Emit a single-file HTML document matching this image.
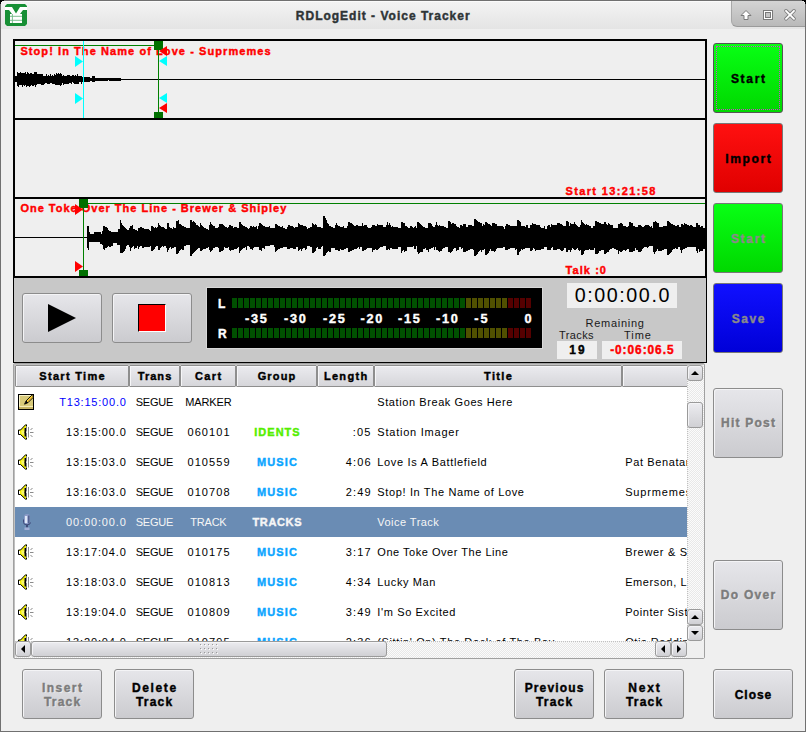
<!DOCTYPE html><html><head><meta charset="utf-8"><style>
html,body{margin:0;padding:0}
body{width:806px;height:732px;position:relative;overflow:hidden;background:#efefef;font-family:'Liberation Sans',sans-serif;color:#000}
.abs{position:absolute}
.t{position:absolute;white-space:nowrap}
.btn{position:absolute;box-sizing:border-box;border:1px solid #8c8c8c;border-radius:3px;background:linear-gradient(#e6e6ea,#cbcbcf);box-shadow:inset 1px 1px 0 #f4f4f6}
</style></head><body>
<div class="abs" style="left:0;top:0;width:806px;height:29px;background:linear-gradient(#f4f4f4,#e4e4e4)"></div>
<div class="abs" style="left:0;top:0;width:804px;height:730px;border:1px solid #707070"></div>
<div class="abs" style="left:3px;top:1px;width:800px;height:1px;background:#fbfbfb"></div>
<div class="t" style="left:295.80px;top:9.74px;font-size:12.0px;line-height:12.0px;letter-spacing:1.000px;color:#2e3436;font-weight:bold;-webkit-text-stroke:0.4px #2e3436;">RDLogEdit - Voice Tracker</div>
<div class="abs" style="left:731px;top:1px;width:73px;height:25px;background:linear-gradient(#d4d4d4,#b9b9b9);border-radius:0 4px 0 6px;border-left:1px solid #a8a8a8;border-bottom:1px solid #9a9a9a"></div>
<svg class="abs" style="left:731px;top:0" width="75" height="28" viewBox="731 0 75 28">
<path d="M746,10.5 L751,15.5 L748,15.5 L748,19.5 L744,19.5 L744,15.5 L741,15.5 Z" fill="#fff" stroke="#7a7a7a" stroke-width="1" stroke-linejoin="round"/>
<rect x="763" y="10" width="10" height="10" fill="#7a7a7a"/>
<rect x="764" y="11" width="8" height="8" fill="#fff"/>
<rect x="765" y="12" width="6" height="6" fill="#7a7a7a"/>
<rect x="766" y="13" width="4" height="4" fill="#c4c4c4"/>
<path d="M786,10.8 L794,18.8 M794,10.8 L786,18.8" stroke="#7a7a7a" stroke-width="3.6" stroke-linecap="round"/>
<path d="M786,10.8 L794,18.8 M794,10.8 L786,18.8" stroke="#fff" stroke-width="1.9" stroke-linecap="round"/>
</svg>
<svg class="abs" style="left:5px;top:4px" width="22" height="22" viewBox="0 0 22 22">
<polygon points="2,0 20,0 22,2 22,20 20,22 2,22 0,20 0,2" fill="#178f35"/>
<polygon points="0,3 7,3 11,9.5 15,3 22,3 22,6 18,6 15,10 7,10 4,6 0,6" fill="#fff"/>
<rect x="5" y="10" width="12" height="9" fill="#fff"/>
<path d="M5,12.3 H17 M5,16.3 H17 M7.4,10 V19" stroke="#6fb884" stroke-width="0.9"/>
</svg>
<svg class="abs" style="left:0;top:0" width="806" height="280" viewBox="0 0 806 280">
<rect x="15" y="41" width="690" height="235" fill="#efefef"/>
<path d="M15,79.5 H705" stroke="#000" stroke-width="1"/>
<path d="M15,237.5 H88" stroke="#000" stroke-width="1"/>
<path d="M15,76 16,76 16,76 17,76 17,72 18,72 18,73 19,73 19,73 20,73 20,72 21,72 21,73 22,73 22,73 23,73 23,73 24,73 24,73 25,73 25,72 26,72 26,74 27,74 27,72 28,72 28,73 29,73 29,74 30,74 30,73 31,73 31,73 32,73 32,74 33,74 33,74 34,74 34,72 35,72 35,72 36,72 36,72 37,72 37,74 38,74 38,74 39,74 39,74 40,74 40,74 41,74 41,74 42,74 42,74 43,74 43,76 44,76 44,76 45,76 45,76 46,76 46,74 47,74 47,76 48,76 48,75 49,75 49,76 50,76 50,74 51,74 51,76 52,76 52,75 53,75 53,76 54,76 54,74 55,74 55,75 56,75 56,73 57,73 57,74 58,74 58,73 59,73 59,74 60,74 60,73 61,73 61,74 62,74 62,76 63,76 63,75 64,75 64,76 65,76 65,76 66,76 66,76 67,76 67,75 68,75 68,75 69,75 69,75 70,75 70,76 71,76 71,76 72,76 72,75 73,75 73,75 74,75 74,76 75,76 75,75 76,75 76,76 77,76 77,74 78,74 78,76 79,76 79,76 80,76 80,76 81,76 81,76 82,76 82,77 83,77 83,77 84,77 84,77 85,77 85,77 86,77 86,77 87,77 87,77 88,77 88,77 89,77 89,77 90,77 90,78 91,78 91,78 92,78 92,76 93,76 93,76 94,76 94,76 95,76 95,78 96,78 96,78 97,78 97,78 98,78 98,78 99,78 99,78 100,78 100,78 101,78 101,78 102,78 102,78 103,78 103,78 104,78 104,78 105,78 105,78 106,78 106,78 107,78 107,78 108,78 108,78 109,78 109,78 110,78 110,78 111,78 111,78 112,78 112,78 113,78 113,78 114,78 114,78 115,78 115,78 116,78 116,78 117,78 117,78 118,78 118,78 119,78 119,78 120,78 120,78 121,78 121,81 120,81 120,81 119,81 119,81 118,81 118,81 117,81 117,81 116,81 116,81 115,81 115,81 114,81 114,81 113,81 113,81 112,81 112,81 111,81 111,81 110,81 110,81 109,81 109,80 108,80 108,81 107,81 107,81 106,81 106,81 105,81 105,81 104,81 104,81 103,81 103,81 102,81 102,81 101,81 101,81 100,81 100,81 99,81 99,81 98,81 98,81 97,81 97,81 96,81 96,81 95,81 95,82 94,82 94,82 93,82 93,82 92,82 92,81 91,81 91,81 90,81 90,82 89,82 89,82 88,82 88,82 87,82 87,82 86,82 86,82 85,82 85,82 84,82 84,82 83,82 83,82 82,82 82,84 81,84 81,82 80,82 80,82 79,82 79,84 78,84 78,84 77,84 77,84 76,84 76,84 75,84 75,84 74,84 74,83 73,83 73,82 72,82 72,84 71,84 71,83 70,83 70,83 69,83 69,84 68,84 68,84 67,84 67,84 66,84 66,84 65,84 65,84 64,84 64,85 63,85 63,83 62,83 62,85 61,85 61,86 60,86 60,85 59,85 59,85 58,85 58,85 57,85 57,85 56,85 56,85 55,85 55,84 54,84 54,84 53,84 53,84 52,84 52,83 51,83 51,83 50,83 50,84 49,84 49,84 48,84 48,84 47,84 47,83 46,83 46,83 45,83 45,84 44,84 44,85 43,85 43,85 42,85 42,85 41,85 41,84 40,84 40,84 39,84 39,84 38,84 38,84 37,84 37,85 36,85 36,87 35,87 35,85 34,85 34,86 33,86 33,86 32,86 32,85 31,85 31,86 30,86 30,87 29,87 29,86 28,86 28,86 27,86 27,87 26,87 26,85 25,85 25,86 24,86 24,85 23,85 23,87 22,87 22,85 21,85 21,85 20,85 20,85 19,85 19,87 18,87 18,86 17,86 17,82 16,82 16,82 15,82Z" fill="#000"/>
<path d="M87,226 88,226 88,226 89,226 89,232 90,232 90,234 91,234 91,234 92,234 92,234 93,234 93,234 94,234 94,232 95,232 95,232 96,232 96,232 97,232 97,232 98,232 98,232 99,232 99,232 100,232 100,232 101,232 101,234 102,234 102,231 103,231 103,226 104,226 104,226 105,226 105,227 106,227 106,227 107,227 107,228 108,228 108,230 109,230 109,231 110,231 110,231 111,231 111,232 112,232 112,232 113,232 113,232 114,232 114,232 115,232 115,232 116,232 116,232 117,232 117,232 118,232 118,229 119,229 119,229 120,229 120,220 121,220 121,223 122,223 122,225 123,225 123,226 124,226 124,227 125,227 125,228 126,228 126,229 127,229 127,230 128,230 128,230 129,230 129,228 130,228 130,226 131,226 131,226 132,226 132,225 133,225 133,229 134,229 134,229 135,229 135,230 136,230 136,230 137,230 137,231 138,231 138,228 139,228 139,228 140,228 140,227 141,227 141,227 142,227 142,228 143,228 143,228 144,228 144,229 145,229 145,229 146,229 146,229 147,229 147,229 148,229 148,229 149,229 149,230 150,230 150,231 151,231 151,226 152,226 152,226 153,226 153,227 154,227 154,228 155,228 155,227 156,227 156,228 157,228 157,227 158,227 158,223 159,223 159,225 160,225 160,226 161,226 161,227 162,227 162,227 163,227 163,227 164,227 164,228 165,228 165,229 166,229 166,229 167,229 167,223 168,223 168,223 169,223 169,227 170,227 170,228 171,228 171,228 172,228 172,229 173,229 173,227 174,227 174,228 175,228 175,228 176,228 176,221 177,221 177,221 178,221 178,220 179,220 179,224 180,224 180,224 181,224 181,225 182,225 182,226 183,226 183,226 184,226 184,227 185,227 185,227 186,227 186,228 187,228 187,228 188,228 188,228 189,228 189,228 190,228 190,220 191,220 191,220 192,220 192,222 193,222 193,221 194,221 194,222 195,222 195,223 196,223 196,225 197,225 197,225 198,225 198,226 199,226 199,227 200,227 200,223 201,223 201,225 202,225 202,226 203,226 203,227 204,227 204,228 205,228 205,228 206,228 206,229 207,229 207,229 208,229 208,230 209,230 209,225 210,225 210,222 211,222 211,224 212,224 212,225 213,225 213,226 214,226 214,226 215,226 215,228 216,228 216,228 217,228 217,228 218,228 218,227 219,227 219,224 220,224 220,224 221,224 221,224 222,224 222,224 223,224 223,225 224,225 224,226 225,226 225,227 226,227 226,227 227,227 227,228 228,228 228,227 229,227 229,225 230,225 230,225 231,225 231,226 232,226 232,226 233,226 233,228 234,228 234,227 235,227 235,227 236,227 236,227 237,227 237,228 238,228 238,228 239,228 239,222 240,222 240,222 241,222 241,224 242,224 242,225 243,225 243,226 244,226 244,226 245,226 245,227 246,227 246,227 247,227 247,228 248,228 248,229 249,229 249,228 250,228 250,226 251,226 251,226 252,226 252,227 253,227 253,226 254,226 254,227 255,227 255,227 256,227 256,226 257,226 257,229 258,229 258,226 259,226 259,223 260,223 260,223 261,223 261,224 262,224 262,225 263,225 263,226 264,226 264,226 265,226 265,227 266,227 266,227 267,227 267,227 268,227 268,227 269,227 269,226 270,226 270,228 271,228 271,228 272,228 272,228 273,228 273,228 274,228 274,228 275,228 275,224 276,224 276,224 277,224 277,225 278,225 278,226 279,226 279,226 280,226 280,227 281,227 281,227 282,227 282,226 283,226 283,228 284,228 284,228 285,228 285,229 286,229 286,229 287,229 287,227 288,227 288,225 289,225 289,225 290,225 290,226 291,226 291,226 292,226 292,226 293,226 293,227 294,227 294,228 295,228 295,227 296,227 296,227 297,227 297,227 298,227 298,223 299,223 299,224 300,224 300,225 301,225 301,225 302,225 302,225 303,225 303,226 304,226 304,226 305,226 305,226 306,226 306,227 307,227 307,229 308,229 308,228 309,228 309,228 310,228 310,227 311,227 311,227 312,227 312,223 313,223 313,224 314,224 314,225 315,225 315,224 316,224 316,225 317,225 317,227 318,227 318,227 319,227 319,227 320,227 320,227 321,227 321,228 322,228 322,228 323,228 323,216 324,216 324,216 325,216 325,218 326,218 326,220 327,220 327,223 328,223 328,224 329,224 329,226 330,226 330,226 331,226 331,227 332,227 332,227 333,227 333,228 334,228 334,228 335,228 335,225 336,225 336,223 337,223 337,225 338,225 338,226 339,226 339,226 340,226 340,227 341,227 341,227 342,227 342,227 343,227 343,226 344,226 344,228 345,228 345,228 346,228 346,228 347,228 347,226 348,226 348,222 349,222 349,222 350,222 350,223 351,223 351,223 352,223 352,224 353,224 353,225 354,225 354,226 355,226 355,226 356,226 356,225 357,225 357,225 358,225 358,226 359,226 359,226 360,226 360,226 361,226 361,226 362,226 362,223 363,223 363,226 364,226 364,225 365,225 365,225 366,225 366,225 367,225 367,227 368,227 368,228 369,228 369,228 370,228 370,228 371,228 371,227 372,227 372,225 373,225 373,225 374,225 374,225 375,225 375,226 376,226 376,226 377,226 377,224 378,224 378,225 379,225 379,225 380,225 380,225 381,225 381,225 382,225 382,225 383,225 383,227 384,227 384,227 385,227 385,227 386,227 386,225 387,225 387,222 388,222 388,225 389,225 389,223 390,223 390,225 391,225 391,227 392,227 392,226 393,226 393,227 394,227 394,227 395,227 395,227 396,227 396,227 397,227 397,227 398,227 398,228 399,228 399,228 400,228 400,228 401,228 401,222 402,222 402,222 403,222 403,223 404,223 404,223 405,223 405,226 406,226 406,226 407,226 407,227 408,227 408,228 409,228 409,228 410,228 410,226 411,226 411,226 412,226 412,227 413,227 413,228 414,228 414,227 415,227 415,226 416,226 416,228 417,228 417,222 418,222 418,222 419,222 419,223 420,223 420,224 421,224 421,225 422,225 422,226 423,226 423,227 424,227 424,227 425,227 425,228 426,228 426,228 427,228 427,228 428,228 428,223 429,223 429,223 430,223 430,223 431,223 431,224 432,224 432,226 433,226 433,227 434,227 434,227 435,227 435,225 436,225 436,222 437,222 437,225 438,225 438,226 439,226 439,225 440,225 440,226 441,226 441,226 442,226 442,226 443,226 443,226 444,226 444,227 445,227 445,227 446,227 446,228 447,228 447,228 448,228 448,221 449,221 449,221 450,221 450,222 451,222 451,224 452,224 452,223 453,223 453,223 454,223 454,224 455,224 455,224 456,224 456,226 457,226 457,227 458,227 458,227 459,227 459,228 460,228 460,225 461,225 461,225 462,225 462,226 463,226 463,224 464,224 464,224 465,224 465,224 466,224 466,227 467,227 467,227 468,227 468,225 469,225 469,225 470,225 470,225 471,225 471,225 472,225 472,226 473,226 473,226 474,226 474,219 475,219 475,219 476,219 476,220 477,220 477,221 478,221 478,222 479,222 479,222 480,222 480,223 481,223 481,223 482,223 482,226 483,226 483,224 484,224 484,225 485,225 485,222 486,222 486,222 487,222 487,223 488,223 488,224 489,224 489,224 490,224 490,225 491,225 491,226 492,226 492,223 493,223 493,223 494,223 494,223 495,223 495,224 496,224 496,224 497,224 497,226 498,226 498,226 499,226 499,226 500,226 500,226 501,226 501,226 502,226 502,226 503,226 503,227 504,227 504,229 505,229 505,226 506,226 506,224 507,224 507,224 508,224 508,225 509,225 509,225 510,225 510,226 511,226 511,226 512,226 512,226 513,226 513,226 514,226 514,226 515,226 515,226 516,226 516,226 517,226 517,220 518,220 518,220 519,220 519,221 520,221 520,222 521,222 521,226 522,226 522,226 523,226 523,226 524,226 524,226 525,226 525,227 526,227 526,225 527,225 527,225 528,225 528,228 529,228 529,228 530,228 530,225 531,225 531,225 532,225 532,223 533,223 533,224 534,224 534,224 535,224 535,224 536,224 536,225 537,225 537,225 538,225 538,225 539,225 539,225 540,225 540,227 541,227 541,228 542,228 542,228 543,228 543,228 544,228 544,226 545,226 545,229 546,229 546,229 547,229 547,226 548,226 548,225 549,225 549,225 550,225 550,227 551,227 551,224 552,224 552,225 553,225 553,225 554,225 554,225 555,225 555,225 556,225 556,225 557,225 557,223 558,223 558,223 559,223 559,223 560,223 560,224 561,224 561,224 562,224 562,225 563,225 563,226 564,226 564,226 565,226 565,226 566,226 566,221 567,221 567,221 568,221 568,222 569,222 569,226 570,226 570,223 571,223 571,224 572,224 572,224 573,224 573,224 574,224 574,222 575,222 575,224 576,224 576,225 577,225 577,226 578,226 578,227 579,227 579,227 580,227 580,225 581,225 581,220 582,220 582,222 583,222 583,223 584,223 584,224 585,224 585,225 586,225 586,224 587,224 587,225 588,225 588,225 589,225 589,226 590,226 590,226 591,226 591,228 592,228 592,228 593,228 593,226 594,226 594,226 595,226 595,221 596,221 596,221 597,221 597,222 598,222 598,222 599,222 599,223 600,223 600,223 601,223 601,224 602,224 602,224 603,224 603,224 604,224 604,222 605,222 605,222 606,222 606,224 607,224 607,225 608,225 608,223 609,223 609,224 610,224 610,225 611,225 611,225 612,225 612,225 613,225 613,228 614,228 614,228 615,228 615,228 616,228 616,228 617,228 617,228 618,228 618,224 619,224 619,224 620,224 620,223 621,223 621,223 622,223 622,224 623,224 623,226 624,226 624,226 625,226 625,226 626,226 626,227 627,227 627,227 628,227 628,226 629,226 629,222 630,222 630,222 631,222 631,223 632,223 632,223 633,223 633,226 634,226 634,226 635,226 635,227 636,227 636,227 637,227 637,227 638,227 638,225 639,225 639,225 640,225 640,225 641,225 641,226 642,226 642,227 643,227 643,227 644,227 644,226 645,226 645,225 646,225 646,225 647,225 647,225 648,225 648,225 649,225 649,226 650,226 650,227 651,227 651,226 652,226 652,228 653,228 653,222 654,222 654,222 655,222 655,221 656,221 656,222 657,222 657,223 658,223 658,223 659,223 659,227 660,227 660,227 661,227 661,227 662,227 662,227 663,227 663,226 664,226 664,226 665,226 665,226 666,226 666,226 667,226 667,221 668,221 668,221 669,221 669,222 670,222 670,223 671,223 671,224 672,224 672,224 673,224 673,225 674,225 674,225 675,225 675,226 676,226 676,226 677,226 677,225 678,225 678,225 679,225 679,227 680,227 680,227 681,227 681,224 682,224 682,224 683,224 683,225 684,225 684,223 685,223 685,224 686,224 686,224 687,224 687,225 688,225 688,225 689,225 689,226 690,226 690,225 691,225 691,225 692,225 692,226 693,226 693,227 694,227 694,227 695,227 695,227 696,227 696,223 697,223 697,223 698,223 698,225 699,225 699,225 700,225 700,227 701,227 701,226 702,226 702,226 703,226 703,228 704,228 704,228 705,228 705,228 706,228 706,249 705,249 705,249 704,249 704,249 703,249 703,251 702,251 702,251 701,251 701,251 700,251 700,252 699,252 699,249 698,249 698,253 697,253 697,251 696,251 696,247 695,247 695,247 694,247 694,247 693,247 693,247 692,247 692,247 691,247 691,247 690,247 690,247 689,247 689,247 688,247 688,247 687,247 687,248 686,248 686,248 685,248 685,249 684,249 684,249 683,249 683,250 682,250 682,253 681,253 681,250 680,250 680,247 679,247 679,247 678,247 678,249 677,249 677,249 676,249 676,248 675,248 675,249 674,249 674,249 673,249 673,250 672,250 672,252 671,252 671,253 670,253 670,254 669,254 669,255 668,255 668,255 667,255 667,249 666,249 666,249 665,249 665,249 664,249 664,250 663,250 663,250 662,250 662,251 661,251 661,251 660,251 660,251 659,251 659,251 658,251 658,249 657,249 657,251 656,251 656,252 655,252 655,254 654,254 654,252 653,252 653,246 652,246 652,246 651,246 651,246 650,246 650,246 649,246 649,247 648,247 648,248 647,248 647,247 646,247 646,247 645,247 645,247 644,247 644,248 643,248 643,249 642,249 642,251 641,251 641,252 640,252 640,252 639,252 639,252 638,252 638,250 637,250 637,250 636,250 636,248 635,248 635,251 634,251 634,251 633,251 633,252 632,252 632,252 631,252 631,252 630,252 630,252 629,252 629,249 628,249 628,249 627,249 627,250 626,250 626,251 625,251 625,250 624,250 624,250 623,250 623,251 622,251 622,252 621,252 621,252 620,252 620,251 619,251 619,254 618,254 618,250 617,250 617,250 616,250 616,249 615,249 615,249 614,249 614,248 613,248 613,248 612,248 612,249 611,249 611,249 610,249 610,250 609,250 609,252 608,252 608,252 607,252 607,253 606,253 606,254 605,254 605,254 604,254 604,250 603,250 603,250 602,250 602,250 601,250 601,251 600,251 600,251 599,251 599,253 598,253 598,254 597,254 597,254 596,254 596,254 595,254 595,248 594,248 594,250 593,250 593,250 592,250 592,250 591,250 591,250 590,250 590,249 589,249 589,250 588,250 588,250 587,250 587,250 586,250 586,250 585,250 585,251 584,251 584,254 583,254 583,255 582,255 582,255 581,255 581,250 580,250 580,251 579,251 579,250 578,250 578,248 577,248 577,249 576,249 576,250 575,250 575,250 574,250 574,249 573,249 573,248 572,248 572,250 571,250 571,252 570,252 570,250 569,250 569,250 568,250 568,252 567,252 567,252 566,252 566,248 565,248 565,248 564,248 564,250 563,250 563,251 562,251 562,251 561,251 561,250 560,250 560,249 559,249 559,249 558,249 558,249 557,249 557,250 556,250 556,250 555,250 555,250 554,250 554,250 553,250 553,247 552,247 552,248 551,248 551,250 550,250 550,250 549,250 549,250 548,250 548,250 547,250 547,247 546,247 546,247 545,247 545,247 544,247 544,249 543,249 543,249 542,249 542,249 541,249 541,250 540,250 540,250 539,250 539,250 538,250 538,250 537,250 537,250 536,250 536,251 535,251 535,249 534,249 534,248 533,248 533,250 532,250 532,251 531,251 531,251 530,251 530,248 529,248 529,248 528,248 528,248 527,248 527,248 526,248 526,248 525,248 525,249 524,249 524,249 523,249 523,250 522,250 522,249 521,249 521,251 520,251 520,252 519,252 519,255 518,255 518,255 517,255 517,249 516,249 516,250 515,250 515,248 514,248 514,248 513,248 513,248 512,248 512,248 511,248 511,248 510,248 510,249 509,249 509,249 508,249 508,250 507,250 507,250 506,250 506,250 505,250 505,247 504,247 504,247 503,247 503,248 502,248 502,248 501,248 501,248 500,248 500,248 499,248 499,248 498,248 498,248 497,248 497,249 496,249 496,251 495,251 495,252 494,252 494,251 493,251 493,251 492,251 492,251 491,251 491,249 490,249 490,251 489,251 489,253 488,253 488,254 487,254 487,255 486,255 486,255 485,255 485,249 484,249 484,250 483,250 483,250 482,250 482,252 481,252 481,250 480,250 480,251 479,251 479,252 478,252 478,254 477,254 477,255 476,255 476,256 475,256 475,256 474,256 474,250 473,250 473,249 472,249 472,249 471,249 471,249 470,249 470,250 469,250 469,250 468,250 468,251 467,251 467,251 466,251 466,252 465,252 465,252 464,252 464,252 463,252 463,248 462,248 462,249 461,249 461,247 460,247 460,247 459,247 459,250 458,250 458,250 457,250 457,251 456,251 456,248 455,248 455,248 454,248 454,249 453,249 453,251 452,251 452,252 451,252 451,253 450,253 450,252 449,252 449,252 448,252 448,247 447,247 447,247 446,247 446,247 445,247 445,248 444,248 444,248 443,248 443,249 442,249 442,251 441,251 441,251 440,251 440,252 439,252 439,251 438,251 438,250 437,250 437,250 436,250 436,247 435,247 435,250 434,250 434,247 433,247 433,248 432,248 432,248 431,248 431,249 430,249 430,249 429,249 429,252 428,252 428,250 427,250 427,250 426,250 426,248 425,248 425,249 424,249 424,249 423,249 423,252 422,252 422,252 421,252 421,252 420,252 420,253 419,253 419,254 418,254 418,252 417,252 417,246 416,246 416,249 415,249 415,249 414,249 414,246 413,246 413,247 412,247 412,247 411,247 411,247 410,247 410,247 409,247 409,247 408,247 408,247 407,247 407,251 406,251 406,251 405,251 405,252 404,252 404,250 403,250 403,251 402,251 402,253 401,253 401,247 400,247 400,247 399,247 399,247 398,247 398,249 397,249 397,249 396,249 396,249 395,249 395,249 394,249 394,249 393,249 393,249 392,249 392,248 391,248 391,248 390,248 390,250 389,250 389,249 388,249 388,250 387,250 387,250 386,250 386,246 385,246 385,246 384,246 384,246 383,246 383,247 382,247 382,247 381,247 381,247 380,247 380,248 379,248 379,249 378,249 378,250 377,250 377,250 376,250 376,249 375,249 375,250 374,250 374,250 373,250 373,252 372,252 372,248 371,248 371,248 370,248 370,248 369,248 369,248 368,248 368,248 367,248 367,249 366,249 366,250 365,250 365,250 364,250 364,251 363,251 363,251 362,251 362,247 361,247 361,247 360,247 360,249 359,249 359,247 358,247 358,248 357,248 357,249 356,249 356,249 355,249 355,249 354,249 354,250 353,250 353,250 352,250 352,251 351,251 351,251 350,251 350,252 349,252 349,252 348,252 348,248 347,248 347,248 346,248 346,249 345,249 345,249 344,249 344,250 343,250 343,250 342,250 342,250 341,250 341,249 340,249 340,251 339,251 339,251 338,251 338,250 337,250 337,250 336,250 336,250 335,250 335,248 334,248 334,248 333,248 333,248 332,248 332,248 331,248 331,252 330,252 330,252 329,252 329,251 328,251 328,252 327,252 327,253 326,253 326,255 325,255 325,256 324,256 324,256 323,256 323,246 322,246 322,247 321,247 321,249 320,249 320,249 319,249 319,249 318,249 318,247 317,247 317,248 316,248 316,251 315,251 315,252 314,252 314,253 313,253 313,253 312,253 312,247 311,247 311,247 310,247 310,246 309,246 309,246 308,246 308,246 307,246 307,249 306,249 306,250 305,250 305,248 304,248 304,248 303,248 303,249 302,249 302,251 301,251 301,249 300,249 300,250 299,250 299,251 298,251 298,247 297,247 297,247 296,247 296,249 295,249 295,249 294,249 294,249 293,249 293,248 292,248 292,248 291,248 291,248 290,248 290,249 289,249 289,249 288,249 288,249 287,249 287,247 286,247 286,247 285,247 285,247 284,247 284,247 283,247 283,248 282,248 282,248 281,248 281,248 280,248 280,249 279,249 279,249 278,249 278,250 277,250 277,251 276,251 276,252 275,252 275,247 274,247 274,245 273,245 273,245 272,245 272,245 271,245 271,245 270,245 270,246 269,246 269,246 268,246 268,246 267,246 267,246 266,246 266,246 265,246 265,249 264,249 264,248 263,248 263,248 262,248 262,251 261,251 261,250 260,250 260,250 259,250 259,247 258,247 258,247 257,247 257,247 256,247 256,247 255,247 255,247 254,247 254,248 253,248 253,250 252,250 252,249 251,249 251,249 250,249 250,247 249,247 249,246 248,246 248,246 247,246 247,250 246,250 246,247 245,247 245,248 244,248 244,248 243,248 243,249 242,249 242,250 241,250 241,251 240,251 240,253 239,253 239,247 238,247 238,248 237,248 237,249 236,249 236,249 235,249 235,249 234,249 234,250 233,250 233,250 232,250 232,250 231,250 231,251 230,251 230,250 229,250 229,247 228,247 228,248 227,248 227,248 226,248 226,248 225,248 225,247 224,247 224,250 223,250 223,251 222,251 222,251 221,251 221,252 220,252 220,252 219,252 219,248 218,248 218,247 217,247 217,247 216,247 216,247 215,247 215,248 214,248 214,248 213,248 213,250 212,250 212,251 211,251 211,252 210,252 210,250 209,250 209,247 208,247 208,248 207,248 207,248 206,248 206,249 205,249 205,249 204,249 204,249 203,249 203,250 202,250 202,251 201,251 201,251 200,251 200,248 199,248 199,248 198,248 198,249 197,249 197,250 196,250 196,251 195,251 195,252 194,252 194,253 193,253 193,254 192,254 192,256 191,256 191,256 190,256 190,245 189,245 189,245 188,245 188,245 187,245 187,245 186,245 186,246 185,246 185,246 184,246 184,250 183,250 183,250 182,250 182,249 181,249 181,250 180,250 180,251 179,251 179,253 178,253 178,254 177,254 177,254 176,254 176,247 175,247 175,247 174,247 174,248 173,248 173,248 172,248 172,249 171,249 171,247 170,247 170,248 169,248 169,250 168,250 168,252 167,252 167,248 166,248 166,246 165,246 165,246 164,246 164,247 163,247 163,246 162,246 162,247 161,247 161,248 160,248 160,250 159,250 159,250 158,250 158,246 157,246 157,246 156,246 156,247 155,247 155,249 154,249 154,250 153,250 153,251 152,251 152,251 151,251 151,246 150,246 150,247 149,247 149,247 148,247 148,247 147,247 147,247 146,247 146,247 145,247 145,247 144,247 144,248 143,248 143,248 142,248 142,246 141,246 141,246 140,246 140,247 139,247 139,249 138,249 138,246 137,246 137,248 136,248 136,248 135,248 135,249 134,249 134,246 133,246 133,247 132,247 132,248 131,248 131,251 130,251 130,247 129,247 129,245 128,245 128,245 127,245 127,246 126,246 126,249 125,249 125,251 124,251 124,252 123,252 123,253 122,253 122,253 121,253 121,253 120,253 120,245 119,245 119,245 118,245 118,245 117,245 117,243 116,243 116,243 115,243 115,243 114,243 114,243 113,243 113,246 112,246 112,246 111,246 111,247 110,247 110,247 109,247 109,246 108,246 108,247 107,247 107,248 106,248 106,248 105,248 105,250 104,250 104,249 103,249 103,245 102,245 102,244 101,244 101,244 100,244 100,242 99,242 99,242 98,242 98,242 97,242 97,242 96,242 96,242 95,242 95,242 94,242 94,242 93,242 93,242 92,242 92,242 91,242 91,242 90,242 90,242 89,242 89,250 88,250 88,248 87,248Z" fill="#000"/>
<g fill="#000">
<rect x="13" y="39" width="694" height="2"/>
<rect x="13" y="118" width="694" height="2"/>
<rect x="13" y="197" width="694" height="2"/>
<rect x="13" y="276" width="694" height="2"/>
<rect x="13" y="39" width="2" height="239"/>
<rect x="705" y="39" width="2" height="239"/>
</g></svg>
<div class="t" style="left:20.40px;top:45.69px;font-size:11.0px;line-height:11.0px;letter-spacing:1.076px;color:#ff0000;font-weight:bold;-webkit-text-stroke:0.4px #ff0000;">Stop! In The Name of Love - Suprmemes</div>
<div class="t" style="left:20.40px;top:203.49px;font-size:11.0px;line-height:11.0px;letter-spacing:0.999px;color:#ff0000;font-weight:bold;-webkit-text-stroke:0.4px #ff0000;">One Toke Over The Line - Brewer &amp; Shipley</div>
<div class="t" style="left:565.50px;top:185.69px;font-size:11.0px;line-height:11.0px;letter-spacing:1.362px;color:#ff0000;font-weight:bold;-webkit-text-stroke:0.4px #ff0000;">Start 13:21:58</div>
<div class="t" style="left:565.50px;top:264.69px;font-size:11.0px;line-height:11.0px;letter-spacing:1.075px;color:#ff0000;font-weight:bold;-webkit-text-stroke:0.4px #ff0000;">Talk :0</div>
<svg class="abs" style="left:0;top:0" width="806" height="280" viewBox="0 0 806 280">
<rect x="15" y="45" width="140" height="1" fill="#008000"/>
<rect x="158" y="41" width="1" height="77" fill="#008000"/>
<rect x="154" y="41" width="9" height="9" fill="#007000"/>
<rect x="154" y="112" width="9" height="6" fill="#007000"/>
<rect x="83" y="41" width="1" height="77" fill="#00ffff"/>
<path d="M75,56 L83,61.5 L75,67Z M75,93 L83,98.5 L75,104Z" fill="#00ffff"/>
<path d="M159,51 L167,46 L167,56Z M159,108 L167,103 L167,113Z" fill="#ff0000"/>
<path d="M159,61 L167,56 L167,66Z M159,98 L167,93 L167,103Z" fill="#00ffff"/>
<rect x="88" y="203" width="617" height="1" fill="#008000"/>
<rect x="83" y="199" width="1" height="77" fill="#008000"/>
<rect x="79" y="199" width="9" height="9" fill="#007000"/>
<rect x="79" y="270" width="9" height="6" fill="#007000"/>
<path d="M75,204 L83,209.5 L75,215Z M75,261 L83,266.5 L75,272Z" fill="#ff0000"/>
</svg>
<div class="abs" style="left:13px;top:278px;width:692px;height:84px;background:#c8c8c8;border:1px solid #000;border-top:0"></div>
<div class="btn" style="left:22px;top:293px;width:80px;height:50px"></div>
<svg class="abs" style="left:48px;top:304px" width="29" height="29"><path d="M0,0 L28,14 L0,28Z" fill="#000"/></svg>
<div class="btn" style="left:112px;top:293px;width:80px;height:50px"></div>
<div class="abs" style="left:138px;top:304px;width:28px;height:28px;background:#ff0000;box-sizing:border-box;border-top:1px solid #000;border-left:1px solid #000;border-right:1px solid #fff;border-bottom:1px solid #fff"></div>
<div class="abs" style="left:206px;top:287px;width:335px;height:60px;background:#000;border:1px solid #d8d8d8"></div>
<svg class="abs" style="left:0;top:0" width="806" height="360" viewBox="0 0 806 360"><rect x="232" y="298" width="5" height="10" fill="#005000"/><rect x="232" y="328" width="5" height="10" fill="#005000"/><rect x="238" y="298" width="5" height="10" fill="#005000"/><rect x="238" y="328" width="5" height="10" fill="#005000"/><rect x="244" y="298" width="5" height="10" fill="#005000"/><rect x="244" y="328" width="5" height="10" fill="#005000"/><rect x="250" y="298" width="5" height="10" fill="#005000"/><rect x="250" y="328" width="5" height="10" fill="#005000"/><rect x="256" y="298" width="5" height="10" fill="#005000"/><rect x="256" y="328" width="5" height="10" fill="#005000"/><rect x="262" y="298" width="5" height="10" fill="#005000"/><rect x="262" y="328" width="5" height="10" fill="#005000"/><rect x="268" y="298" width="5" height="10" fill="#005000"/><rect x="268" y="328" width="5" height="10" fill="#005000"/><rect x="274" y="298" width="5" height="10" fill="#005000"/><rect x="274" y="328" width="5" height="10" fill="#005000"/><rect x="280" y="298" width="5" height="10" fill="#005000"/><rect x="280" y="328" width="5" height="10" fill="#005000"/><rect x="286" y="298" width="5" height="10" fill="#005000"/><rect x="286" y="328" width="5" height="10" fill="#005000"/><rect x="292" y="298" width="5" height="10" fill="#005000"/><rect x="292" y="328" width="5" height="10" fill="#005000"/><rect x="298" y="298" width="5" height="10" fill="#005000"/><rect x="298" y="328" width="5" height="10" fill="#005000"/><rect x="304" y="298" width="5" height="10" fill="#005000"/><rect x="304" y="328" width="5" height="10" fill="#005000"/><rect x="310" y="298" width="5" height="10" fill="#005000"/><rect x="310" y="328" width="5" height="10" fill="#005000"/><rect x="316" y="298" width="5" height="10" fill="#005000"/><rect x="316" y="328" width="5" height="10" fill="#005000"/><rect x="322" y="298" width="5" height="10" fill="#005000"/><rect x="322" y="328" width="5" height="10" fill="#005000"/><rect x="328" y="298" width="5" height="10" fill="#005000"/><rect x="328" y="328" width="5" height="10" fill="#005000"/><rect x="334" y="298" width="5" height="10" fill="#005000"/><rect x="334" y="328" width="5" height="10" fill="#005000"/><rect x="340" y="298" width="5" height="10" fill="#005000"/><rect x="340" y="328" width="5" height="10" fill="#005000"/><rect x="346" y="298" width="5" height="10" fill="#005000"/><rect x="346" y="328" width="5" height="10" fill="#005000"/><rect x="352" y="298" width="5" height="10" fill="#005000"/><rect x="352" y="328" width="5" height="10" fill="#005000"/><rect x="358" y="298" width="5" height="10" fill="#005000"/><rect x="358" y="328" width="5" height="10" fill="#005000"/><rect x="364" y="298" width="5" height="10" fill="#005000"/><rect x="364" y="328" width="5" height="10" fill="#005000"/><rect x="370" y="298" width="5" height="10" fill="#005000"/><rect x="370" y="328" width="5" height="10" fill="#005000"/><rect x="376" y="298" width="5" height="10" fill="#005000"/><rect x="376" y="328" width="5" height="10" fill="#005000"/><rect x="382" y="298" width="5" height="10" fill="#005000"/><rect x="382" y="328" width="5" height="10" fill="#005000"/><rect x="388" y="298" width="5" height="10" fill="#005000"/><rect x="388" y="328" width="5" height="10" fill="#005000"/><rect x="394" y="298" width="5" height="10" fill="#005000"/><rect x="394" y="328" width="5" height="10" fill="#005000"/><rect x="400" y="298" width="5" height="10" fill="#005000"/><rect x="400" y="328" width="5" height="10" fill="#005000"/><rect x="406" y="298" width="5" height="10" fill="#005000"/><rect x="406" y="328" width="5" height="10" fill="#005000"/><rect x="412" y="298" width="5" height="10" fill="#005000"/><rect x="412" y="328" width="5" height="10" fill="#005000"/><rect x="418" y="298" width="5" height="10" fill="#005000"/><rect x="418" y="328" width="5" height="10" fill="#005000"/><rect x="424" y="298" width="5" height="10" fill="#005000"/><rect x="424" y="328" width="5" height="10" fill="#005000"/><rect x="430" y="298" width="5" height="10" fill="#005000"/><rect x="430" y="328" width="5" height="10" fill="#005000"/><rect x="436" y="298" width="5" height="10" fill="#005000"/><rect x="436" y="328" width="5" height="10" fill="#005000"/><rect x="442" y="298" width="5" height="10" fill="#005000"/><rect x="442" y="328" width="5" height="10" fill="#005000"/><rect x="448" y="298" width="5" height="10" fill="#005000"/><rect x="448" y="328" width="5" height="10" fill="#005000"/><rect x="454" y="298" width="5" height="10" fill="#005000"/><rect x="454" y="328" width="5" height="10" fill="#005000"/><rect x="460" y="298" width="5" height="10" fill="#005000"/><rect x="460" y="328" width="5" height="10" fill="#005000"/><rect x="466" y="298" width="5" height="10" fill="#505000"/><rect x="466" y="328" width="5" height="10" fill="#505000"/><rect x="472" y="298" width="5" height="10" fill="#505000"/><rect x="472" y="328" width="5" height="10" fill="#505000"/><rect x="478" y="298" width="5" height="10" fill="#505000"/><rect x="478" y="328" width="5" height="10" fill="#505000"/><rect x="484" y="298" width="5" height="10" fill="#505000"/><rect x="484" y="328" width="5" height="10" fill="#505000"/><rect x="490" y="298" width="5" height="10" fill="#505000"/><rect x="490" y="328" width="5" height="10" fill="#505000"/><rect x="496" y="298" width="5" height="10" fill="#505000"/><rect x="496" y="328" width="5" height="10" fill="#505000"/><rect x="502" y="298" width="5" height="10" fill="#505000"/><rect x="502" y="328" width="5" height="10" fill="#505000"/><rect x="508" y="298" width="5" height="10" fill="#550000"/><rect x="508" y="328" width="5" height="10" fill="#550000"/><rect x="514" y="298" width="5" height="10" fill="#550000"/><rect x="514" y="328" width="5" height="10" fill="#550000"/><rect x="520" y="298" width="5" height="10" fill="#550000"/><rect x="520" y="328" width="5" height="10" fill="#550000"/><rect x="526" y="298" width="5" height="10" fill="#550000"/><rect x="526" y="328" width="5" height="10" fill="#550000"/></svg>
<div class="t" style="left:218.00px;top:297.84px;font-size:12.0px;line-height:12.0px;letter-spacing:0.000px;color:#fff;font-weight:bold;-webkit-text-stroke:0.4px #fff;">L</div>
<div class="t" style="left:218.00px;top:327.84px;font-size:12.0px;line-height:12.0px;letter-spacing:0.000px;color:#fff;font-weight:bold;-webkit-text-stroke:0.4px #fff;">R</div>
<div class="t" style="left:245.00px;top:313.23px;font-size:12.72px;line-height:12.72px;letter-spacing:1.675px;color:#fff;font-weight:bold;-webkit-text-stroke:0.4px #fff;">-35</div>
<div class="t" style="left:284.00px;top:313.23px;font-size:12.72px;line-height:12.72px;letter-spacing:1.675px;color:#fff;font-weight:bold;-webkit-text-stroke:0.4px #fff;">-30</div>
<div class="t" style="left:323.00px;top:313.23px;font-size:12.72px;line-height:12.72px;letter-spacing:1.675px;color:#fff;font-weight:bold;-webkit-text-stroke:0.4px #fff;">-25</div>
<div class="t" style="left:360.50px;top:313.23px;font-size:12.72px;line-height:12.72px;letter-spacing:1.675px;color:#fff;font-weight:bold;-webkit-text-stroke:0.4px #fff;">-20</div>
<div class="t" style="left:398.00px;top:313.23px;font-size:12.72px;line-height:12.72px;letter-spacing:1.675px;color:#fff;font-weight:bold;-webkit-text-stroke:0.4px #fff;">-15</div>
<div class="t" style="left:436.00px;top:313.23px;font-size:12.72px;line-height:12.72px;letter-spacing:1.675px;color:#fff;font-weight:bold;-webkit-text-stroke:0.4px #fff;">-10</div>
<div class="t" style="left:474.30px;top:313.23px;font-size:12.72px;line-height:12.72px;letter-spacing:2.050px;color:#fff;font-weight:bold;-webkit-text-stroke:0.4px #fff;">-5</div>
<div class="t" style="left:524.40px;top:313.23px;font-size:12.72px;line-height:12.72px;letter-spacing:0.000px;color:#fff;font-weight:bold;-webkit-text-stroke:0.4px #fff;">0</div>
<div class="abs" style="left:567px;top:283px;width:110px;height:25px;background:#efefef"></div>
<div class="t" style="left:574.70px;top:285.92px;font-size:19.7px;line-height:19.7px;letter-spacing:1.575px;color:#000;">0:00:00.0</div>
<div class="t" style="left:585.50px;top:317.99px;font-size:11.0px;line-height:11.0px;letter-spacing:0.725px;color:#1a1a1a;">Remaining</div>
<div class="t" style="left:559.00px;top:329.69px;font-size:11.0px;line-height:11.0px;letter-spacing:0.390px;color:#1a1a1a;">Tracks</div>
<div class="t" style="left:624.00px;top:329.69px;font-size:11.0px;line-height:11.0px;letter-spacing:0.967px;color:#1a1a1a;">Time</div>
<div class="abs" style="left:557px;top:341px;width:40px;height:18px;background:#efefef"></div>
<div class="t" style="left:569.35px;top:344.94px;font-size:11.88px;line-height:11.88px;letter-spacing:2.050px;color:#000;font-weight:bold;-webkit-text-stroke:0.4px #000;">19</div>
<div class="abs" style="left:602px;top:341px;width:80px;height:18px;background:#efefef"></div>
<div class="t" style="left:610.17px;top:344.94px;font-size:11.88px;line-height:11.88px;letter-spacing:0.950px;color:#ff0000;font-weight:bold;-webkit-text-stroke:0.4px #ff0000;">-0:06:06.5</div>
<div class="btn" style="left:713px;top:43px;width:70px;height:70px;background:linear-gradient(#08ff14,#00d800);border-color:#555;box-shadow:none"></div>
<div class="abs" style="left:716px;top:46px;width:62px;height:62px;border:1px dotted #d040d0"></div>
<div class="t" style="left:730.92px;top:72.64px;font-size:12.0px;line-height:12.0px;letter-spacing:1.700px;color:#000;font-weight:bold;-webkit-text-stroke:0.4px #000;">Start</div>
<div class="btn" style="left:713px;top:123px;width:70px;height:70px;background:linear-gradient(#ff1010,#e00000);border-color:#777;box-shadow:none"></div>
<div class="t" style="left:725.27px;top:152.84px;font-size:12.0px;line-height:12.0px;letter-spacing:1.620px;color:#000;font-weight:bold;-webkit-text-stroke:0.4px #000;">Import</div>
<div class="btn" style="left:713px;top:203px;width:70px;height:70px;background:linear-gradient(#08ff14,#00d800);border-color:#777;box-shadow:none"></div>
<div class="t" style="left:730.92px;top:232.84px;font-size:12.0px;line-height:12.0px;letter-spacing:1.700px;color:#8a8a8a;font-weight:bold;-webkit-text-stroke:0.4px #8a8a8a;">Start</div>
<div class="btn" style="left:713px;top:283px;width:70px;height:70px;background:linear-gradient(#1010ff,#0000d8);border-color:#777;box-shadow:none"></div>
<div class="t" style="left:731.65px;top:313.34px;font-size:12.0px;line-height:12.0px;letter-spacing:1.550px;color:#8a8a8a;font-weight:bold;-webkit-text-stroke:0.4px #8a8a8a;">Save</div>
<div class="btn" style="left:713px;top:388px;width:70px;height:70px;background:linear-gradient(#e6e6ea,#cbcbcf);"></div>
<div class="t" style="left:721.00px;top:417.34px;font-size:12.0px;line-height:12.0px;letter-spacing:1.236px;color:#7c7c7c;font-weight:bold;-webkit-text-stroke:0.4px #7c7c7c;text-shadow:1px 1px 0 rgba(255,255,255,0.55);">Hit Post</div>
<div class="btn" style="left:713px;top:560px;width:70px;height:70px;background:linear-gradient(#e6e6ea,#cbcbcf);"></div>
<div class="t" style="left:720.77px;top:589.34px;font-size:12.0px;line-height:12.0px;letter-spacing:1.292px;color:#7c7c7c;font-weight:bold;-webkit-text-stroke:0.4px #7c7c7c;text-shadow:1px 1px 0 rgba(255,255,255,0.55);">Do Over</div>
<div class="btn" style="left:22px;top:669px;width:80px;height:50px"></div>
<div class="t" style="left:42.02px;top:682.14px;font-size:12.0px;line-height:12.0px;letter-spacing:1.450px;color:#7c7c7c;font-weight:bold;-webkit-text-stroke:0.4px #7c7c7c;text-shadow:1px 1px 0 rgba(255,255,255,0.55);">Insert</div>
<div class="t" style="left:43.88px;top:695.64px;font-size:12.0px;line-height:12.0px;letter-spacing:1.213px;color:#7c7c7c;font-weight:bold;-webkit-text-stroke:0.4px #7c7c7c;text-shadow:1px 1px 0 rgba(255,255,255,0.55);">Track</div>
<div class="btn" style="left:114px;top:669px;width:80px;height:50px"></div>
<div class="t" style="left:131.88px;top:682.14px;font-size:12.0px;line-height:12.0px;letter-spacing:1.650px;color:#000;font-weight:bold;-webkit-text-stroke:0.4px #000;">Delete</div>
<div class="t" style="left:135.88px;top:695.64px;font-size:12.0px;line-height:12.0px;letter-spacing:1.213px;color:#000;font-weight:bold;-webkit-text-stroke:0.4px #000;">Track</div>
<div class="btn" style="left:514px;top:669px;width:80px;height:50px"></div>
<div class="t" style="left:524.65px;top:682.14px;font-size:12.0px;line-height:12.0px;letter-spacing:1.143px;color:#000;font-weight:bold;-webkit-text-stroke:0.4px #000;">Previous</div>
<div class="t" style="left:535.88px;top:695.64px;font-size:12.0px;line-height:12.0px;letter-spacing:1.213px;color:#000;font-weight:bold;-webkit-text-stroke:0.4px #000;">Track</div>
<div class="btn" style="left:604px;top:669px;width:80px;height:50px"></div>
<div class="t" style="left:628.17px;top:682.14px;font-size:12.0px;line-height:12.0px;letter-spacing:1.883px;color:#000;font-weight:bold;-webkit-text-stroke:0.4px #000;">Next</div>
<div class="t" style="left:625.88px;top:695.64px;font-size:12.0px;line-height:12.0px;letter-spacing:1.213px;color:#000;font-weight:bold;-webkit-text-stroke:0.4px #000;">Track</div>
<div class="btn" style="left:713px;top:669px;width:80px;height:50px"></div>
<div class="t" style="left:734.77px;top:689.14px;font-size:12.0px;line-height:12.0px;letter-spacing:0.938px;color:#000;font-weight:bold;-webkit-text-stroke:0.4px #000;">Close</div>
<div class="abs" style="left:13px;top:363px;width:690px;height:294px;border:1px solid #a0a0a0;border-radius:2px;background:#fff;box-shadow:inset 1px 1px 0 #c0c0c0"></div>
<div class="abs" style="left:15px;top:365px;width:114px;height:22px;box-sizing:border-box;border:1px solid #8e8e8e;border-radius:1px;background:linear-gradient(#ebebef,#d6d6da);box-shadow:inset 1px 1px 0 #f6f6f8"></div>
<div class="t" style="left:39.35px;top:370.99px;font-size:11.0px;line-height:11.0px;letter-spacing:1.300px;color:#000;font-weight:bold;-webkit-text-stroke:0.4px #000;">Start Time</div>
<div class="abs" style="left:129px;top:365px;width:51px;height:22px;box-sizing:border-box;border:1px solid #8e8e8e;border-radius:1px;background:linear-gradient(#ebebef,#d6d6da);box-shadow:inset 1px 1px 0 #f6f6f8"></div>
<div class="t" style="left:137.75px;top:370.99px;font-size:11.0px;line-height:11.0px;letter-spacing:1.037px;color:#000;font-weight:bold;-webkit-text-stroke:0.4px #000;">Trans</div>
<div class="abs" style="left:180px;top:365px;width:56px;height:22px;box-sizing:border-box;border:1px solid #8e8e8e;border-radius:1px;background:linear-gradient(#ebebef,#d6d6da);box-shadow:inset 1px 1px 0 #f6f6f8"></div>
<div class="t" style="left:194.90px;top:370.99px;font-size:11.0px;line-height:11.0px;letter-spacing:1.400px;color:#000;font-weight:bold;-webkit-text-stroke:0.4px #000;">Cart</div>
<div class="abs" style="left:236px;top:365px;width:81px;height:22px;box-sizing:border-box;border:1px solid #8e8e8e;border-radius:1px;background:linear-gradient(#ebebef,#d6d6da);box-shadow:inset 1px 1px 0 #f6f6f8"></div>
<div class="t" style="left:257.65px;top:370.99px;font-size:11.0px;line-height:11.0px;letter-spacing:1.175px;color:#000;font-weight:bold;-webkit-text-stroke:0.4px #000;">Group</div>
<div class="abs" style="left:317px;top:365px;width:57px;height:22px;box-sizing:border-box;border:1px solid #8e8e8e;border-radius:1px;background:linear-gradient(#ebebef,#d6d6da);box-shadow:inset 1px 1px 0 #f6f6f8"></div>
<div class="t" style="left:323.88px;top:370.99px;font-size:11.0px;line-height:11.0px;letter-spacing:1.320px;color:#000;font-weight:bold;-webkit-text-stroke:0.4px #000;">Length</div>
<div class="abs" style="left:374px;top:365px;width:248px;height:22px;box-sizing:border-box;border:1px solid #8e8e8e;border-radius:1px;background:linear-gradient(#ebebef,#d6d6da);box-shadow:inset 1px 1px 0 #f6f6f8"></div>
<div class="t" style="left:484.12px;top:370.99px;font-size:11.0px;line-height:11.0px;letter-spacing:1.338px;color:#000;font-weight:bold;-webkit-text-stroke:0.4px #000;">Title</div>
<div class="abs" style="left:622px;top:365px;width:79px;height:22px;box-sizing:border-box;border:1px solid #8e8e8e;border-radius:1px;background:linear-gradient(#ebebef,#d6d6da);box-shadow:inset 1px 1px 0 #f6f6f8"></div>
<div class="abs" style="left:0;top:387px;width:687px;height:254px;overflow:hidden">
<svg class="abs" style="left:18px;top:7px" width="16" height="16" viewBox="0 0 16 16"><rect x="0" y="0" width="16" height="16" fill="#000"/><rect x="1" y="1" width="14" height="14" fill="#d8ca7a"/><rect x="1" y="1" width="12" height="1" fill="#f8f2c8"/><rect x="1" y="1" width="1" height="11" fill="#f8f2c8"/><rect x="1" y="12" width="14" height="1" fill="#f4ecb8"/><rect x="1" y="13" width="14" height="2" fill="#c4b262"/><polygon points="8,7 13.8,1.2 15.6,3 9.8,8.8" fill="#fbd838" stroke="#000" stroke-width="0.9"/><path d="M9.5,7.5 L14,3" stroke="#f0a020" stroke-width="0.8"/><polygon points="6.5,10.2 8,7 9.8,8.8" fill="#000" stroke="#000" stroke-width="0.8"/></svg><div class="t" style="left:59.25px;top:9.69px;font-size:11.0px;line-height:11.0px;letter-spacing:0.795px;color:#0000ff;">T13:15:00.0</div><div class="t" style="left:135.78px;top:9.69px;font-size:11.0px;line-height:11.0px;letter-spacing:-0.262px;color:#000;">SEGUE</div><div class="t" style="left:185.28px;top:9.69px;font-size:11.0px;line-height:11.0px;letter-spacing:-0.120px;color:#000;">MARKER</div><div class="t" style="left:377.30px;top:9.69px;font-size:11.0px;line-height:11.0px;letter-spacing:0.584px;color:#000;">Station Break Goes Here</div><svg class="abs" style="left:18px;top:37px" width="16" height="16" viewBox="0 0 16 16"><rect x="7" y="1" width="3" height="14" fill="#fff"/><polygon points="0.5,6 2.5,6 7.5,0.8 8.5,0.8 8.5,15.2 7.5,15.2 2.5,10.5 0.5,10.5" fill="#f6f200" stroke="#000" stroke-width="1" stroke-linejoin="bevel"/><path d="M3.5,7 h1 M5.5,7 h1 M4.5,8 h1 M3.5,9 h1 M5.5,9 h1 M4.5,10 h1 M6,5 h1 M6,11 h1 M1.5,7 v3" stroke="#fff" stroke-width="1"/><rect x="6.5" y="4" width="1.6" height="8.5" fill="#000"/><circle cx="8.3" cy="8.2" r="1.5" fill="#000"/><rect x="8" y="7.5" width="1" height="1.2" fill="#fff"/><rect x="8.5" y="2" width="1.5" height="12" fill="#fff"/><path d="M10.5,3 V13.5" stroke="#8e8e8e" stroke-width="1"/><path d="M12.5,6 L14.5,4 M12,8.5 H15.5 M12.5,11 L14.5,13" stroke="#8a8a8a" stroke-width="1"/></svg><div class="t" style="left:66.00px;top:39.69px;font-size:11.0px;line-height:11.0px;letter-spacing:0.878px;color:#000;">13:15:00.0</div><div class="t" style="left:135.78px;top:39.69px;font-size:11.0px;line-height:11.0px;letter-spacing:-0.262px;color:#000;">SEGUE</div><div class="t" style="left:187.50px;top:39.69px;font-size:11.0px;line-height:11.0px;letter-spacing:1.060px;color:#000;">060101</div><div class="t" style="left:254.32px;top:39.69px;font-size:11.0px;line-height:11.0px;letter-spacing:1.000px;color:#55ee00;font-weight:bold;-webkit-text-stroke:0.4px #55ee00;">IDENTS</div><div class="t" style="left:352.80px;top:39.69px;font-size:11.0px;line-height:11.0px;letter-spacing:1.200px;color:#000;">:05</div><div class="t" style="left:377.30px;top:39.69px;font-size:11.0px;line-height:11.0px;letter-spacing:0.773px;color:#000;">Station Imager</div><svg class="abs" style="left:18px;top:67px" width="16" height="16" viewBox="0 0 16 16"><rect x="7" y="1" width="3" height="14" fill="#fff"/><polygon points="0.5,6 2.5,6 7.5,0.8 8.5,0.8 8.5,15.2 7.5,15.2 2.5,10.5 0.5,10.5" fill="#f6f200" stroke="#000" stroke-width="1" stroke-linejoin="bevel"/><path d="M3.5,7 h1 M5.5,7 h1 M4.5,8 h1 M3.5,9 h1 M5.5,9 h1 M4.5,10 h1 M6,5 h1 M6,11 h1 M1.5,7 v3" stroke="#fff" stroke-width="1"/><rect x="6.5" y="4" width="1.6" height="8.5" fill="#000"/><circle cx="8.3" cy="8.2" r="1.5" fill="#000"/><rect x="8" y="7.5" width="1" height="1.2" fill="#fff"/><rect x="8.5" y="2" width="1.5" height="12" fill="#fff"/><path d="M10.5,3 V13.5" stroke="#8e8e8e" stroke-width="1"/><path d="M12.5,6 L14.5,4 M12,8.5 H15.5 M12.5,11 L14.5,13" stroke="#8a8a8a" stroke-width="1"/></svg><div class="t" style="left:66.00px;top:69.69px;font-size:11.0px;line-height:11.0px;letter-spacing:0.878px;color:#000;">13:15:03.0</div><div class="t" style="left:135.78px;top:69.69px;font-size:11.0px;line-height:11.0px;letter-spacing:-0.262px;color:#000;">SEGUE</div><div class="t" style="left:187.50px;top:69.69px;font-size:11.0px;line-height:11.0px;letter-spacing:1.060px;color:#000;">010559</div><div class="t" style="left:257.02px;top:69.69px;font-size:11.0px;line-height:11.0px;letter-spacing:1.125px;color:#0aa5ff;font-weight:bold;-webkit-text-stroke:0.4px #0aa5ff;">MUSIC</div><div class="t" style="left:345.80px;top:69.69px;font-size:11.0px;line-height:11.0px;letter-spacing:1.100px;color:#000;">4:06</div><div class="t" style="left:377.30px;top:69.69px;font-size:11.0px;line-height:11.0px;letter-spacing:0.670px;color:#000;">Love Is A Battlefield</div><div class="t" style="left:625.20px;top:69.69px;font-size:11.0px;line-height:11.0px;letter-spacing:0.620px;color:#000;">Pat Benatar</div><svg class="abs" style="left:18px;top:97px" width="16" height="16" viewBox="0 0 16 16"><rect x="7" y="1" width="3" height="14" fill="#fff"/><polygon points="0.5,6 2.5,6 7.5,0.8 8.5,0.8 8.5,15.2 7.5,15.2 2.5,10.5 0.5,10.5" fill="#f6f200" stroke="#000" stroke-width="1" stroke-linejoin="bevel"/><path d="M3.5,7 h1 M5.5,7 h1 M4.5,8 h1 M3.5,9 h1 M5.5,9 h1 M4.5,10 h1 M6,5 h1 M6,11 h1 M1.5,7 v3" stroke="#fff" stroke-width="1"/><rect x="6.5" y="4" width="1.6" height="8.5" fill="#000"/><circle cx="8.3" cy="8.2" r="1.5" fill="#000"/><rect x="8" y="7.5" width="1" height="1.2" fill="#fff"/><rect x="8.5" y="2" width="1.5" height="12" fill="#fff"/><path d="M10.5,3 V13.5" stroke="#8e8e8e" stroke-width="1"/><path d="M12.5,6 L14.5,4 M12,8.5 H15.5 M12.5,11 L14.5,13" stroke="#8a8a8a" stroke-width="1"/></svg><div class="t" style="left:66.00px;top:99.69px;font-size:11.0px;line-height:11.0px;letter-spacing:0.878px;color:#000;">13:16:03.0</div><div class="t" style="left:135.78px;top:99.69px;font-size:11.0px;line-height:11.0px;letter-spacing:-0.262px;color:#000;">SEGUE</div><div class="t" style="left:187.50px;top:99.69px;font-size:11.0px;line-height:11.0px;letter-spacing:1.060px;color:#000;">010708</div><div class="t" style="left:257.02px;top:99.69px;font-size:11.0px;line-height:11.0px;letter-spacing:1.125px;color:#0aa5ff;font-weight:bold;-webkit-text-stroke:0.4px #0aa5ff;">MUSIC</div><div class="t" style="left:345.80px;top:99.69px;font-size:11.0px;line-height:11.0px;letter-spacing:1.100px;color:#000;">2:49</div><div class="t" style="left:377.30px;top:99.69px;font-size:11.0px;line-height:11.0px;letter-spacing:0.640px;color:#000;">Stop! In The Name of Love</div><div class="t" style="left:625.20px;top:99.69px;font-size:11.0px;line-height:11.0px;letter-spacing:0.831px;color:#000;">Suprmemes</div><div class="abs" style="left:15px;top:120px;width:672px;height:30px;background:#6a8cb4"></div><svg class="abs" style="left:22px;top:126px" width="10" height="17" viewBox="0 0 10 17"><rect x="2" y="1" width="6" height="10.5" rx="3" fill="#8d9cc8"/><rect x="3" y="3" width="2.2" height="7" fill="#dfe7f8"/><rect x="6" y="2.5" width="1.6" height="8" fill="#52608f"/><path d="M1.5,6.5 V9.5 Q1.5,11.8 5,11.8 Q8.5,11.8 8.5,9.5" stroke="#3e4a7a" stroke-width="1" fill="none"/><rect x="4" y="12" width="2" height="2.5" fill="#3e4a7a"/><rect x="2.5" y="14.5" width="5" height="2.5" fill="#a2aed6"/></svg><div class="t" style="left:66.00px;top:129.69px;font-size:11.0px;line-height:11.0px;letter-spacing:0.878px;color:#f6f6f6;">00:00:00.0</div><div class="t" style="left:135.78px;top:129.69px;font-size:11.0px;line-height:11.0px;letter-spacing:-0.262px;color:#f6f6f6;">SEGUE</div><div class="t" style="left:190.28px;top:129.69px;font-size:11.0px;line-height:11.0px;letter-spacing:-0.212px;color:#f6f6f6;">TRACK</div><div class="t" style="left:252.50px;top:129.69px;font-size:11.0px;line-height:11.0px;letter-spacing:0.630px;color:#f6f6f6;font-weight:bold;-webkit-text-stroke:0.4px #f6f6f6;">TRACKS</div><div class="t" style="left:377.30px;top:129.69px;font-size:11.0px;line-height:11.0px;letter-spacing:0.465px;color:#f6f6f6;">Voice Track</div><svg class="abs" style="left:18px;top:157px" width="16" height="16" viewBox="0 0 16 16"><rect x="7" y="1" width="3" height="14" fill="#fff"/><polygon points="0.5,6 2.5,6 7.5,0.8 8.5,0.8 8.5,15.2 7.5,15.2 2.5,10.5 0.5,10.5" fill="#f6f200" stroke="#000" stroke-width="1" stroke-linejoin="bevel"/><path d="M3.5,7 h1 M5.5,7 h1 M4.5,8 h1 M3.5,9 h1 M5.5,9 h1 M4.5,10 h1 M6,5 h1 M6,11 h1 M1.5,7 v3" stroke="#fff" stroke-width="1"/><rect x="6.5" y="4" width="1.6" height="8.5" fill="#000"/><circle cx="8.3" cy="8.2" r="1.5" fill="#000"/><rect x="8" y="7.5" width="1" height="1.2" fill="#fff"/><rect x="8.5" y="2" width="1.5" height="12" fill="#fff"/><path d="M10.5,3 V13.5" stroke="#8e8e8e" stroke-width="1"/><path d="M12.5,6 L14.5,4 M12,8.5 H15.5 M12.5,11 L14.5,13" stroke="#8a8a8a" stroke-width="1"/></svg><div class="t" style="left:66.00px;top:159.69px;font-size:11.0px;line-height:11.0px;letter-spacing:0.878px;color:#000;">13:17:04.0</div><div class="t" style="left:135.78px;top:159.69px;font-size:11.0px;line-height:11.0px;letter-spacing:-0.262px;color:#000;">SEGUE</div><div class="t" style="left:187.50px;top:159.69px;font-size:11.0px;line-height:11.0px;letter-spacing:1.060px;color:#000;">010175</div><div class="t" style="left:257.02px;top:159.69px;font-size:11.0px;line-height:11.0px;letter-spacing:1.125px;color:#0aa5ff;font-weight:bold;-webkit-text-stroke:0.4px #0aa5ff;">MUSIC</div><div class="t" style="left:345.80px;top:159.69px;font-size:11.0px;line-height:11.0px;letter-spacing:1.100px;color:#000;">3:17</div><div class="t" style="left:377.30px;top:159.69px;font-size:11.0px;line-height:11.0px;letter-spacing:0.529px;color:#000;">One Toke Over The Line</div><div class="t" style="left:625.20px;top:159.69px;font-size:11.0px;line-height:11.0px;letter-spacing:0.697px;color:#000;">Brewer &amp; Shipley</div><svg class="abs" style="left:18px;top:187px" width="16" height="16" viewBox="0 0 16 16"><rect x="7" y="1" width="3" height="14" fill="#fff"/><polygon points="0.5,6 2.5,6 7.5,0.8 8.5,0.8 8.5,15.2 7.5,15.2 2.5,10.5 0.5,10.5" fill="#f6f200" stroke="#000" stroke-width="1" stroke-linejoin="bevel"/><path d="M3.5,7 h1 M5.5,7 h1 M4.5,8 h1 M3.5,9 h1 M5.5,9 h1 M4.5,10 h1 M6,5 h1 M6,11 h1 M1.5,7 v3" stroke="#fff" stroke-width="1"/><rect x="6.5" y="4" width="1.6" height="8.5" fill="#000"/><circle cx="8.3" cy="8.2" r="1.5" fill="#000"/><rect x="8" y="7.5" width="1" height="1.2" fill="#fff"/><rect x="8.5" y="2" width="1.5" height="12" fill="#fff"/><path d="M10.5,3 V13.5" stroke="#8e8e8e" stroke-width="1"/><path d="M12.5,6 L14.5,4 M12,8.5 H15.5 M12.5,11 L14.5,13" stroke="#8a8a8a" stroke-width="1"/></svg><div class="t" style="left:66.00px;top:189.69px;font-size:11.0px;line-height:11.0px;letter-spacing:0.878px;color:#000;">13:18:03.0</div><div class="t" style="left:135.78px;top:189.69px;font-size:11.0px;line-height:11.0px;letter-spacing:-0.262px;color:#000;">SEGUE</div><div class="t" style="left:187.50px;top:189.69px;font-size:11.0px;line-height:11.0px;letter-spacing:1.060px;color:#000;">010813</div><div class="t" style="left:257.02px;top:189.69px;font-size:11.0px;line-height:11.0px;letter-spacing:1.125px;color:#0aa5ff;font-weight:bold;-webkit-text-stroke:0.4px #0aa5ff;">MUSIC</div><div class="t" style="left:345.80px;top:189.69px;font-size:11.0px;line-height:11.0px;letter-spacing:1.100px;color:#000;">4:34</div><div class="t" style="left:377.30px;top:189.69px;font-size:11.0px;line-height:11.0px;letter-spacing:0.619px;color:#000;">Lucky Man</div><div class="t" style="left:625.20px;top:189.69px;font-size:11.0px;line-height:11.0px;letter-spacing:0.583px;color:#000;">Emerson, Lake &amp; Palmer</div><svg class="abs" style="left:18px;top:217px" width="16" height="16" viewBox="0 0 16 16"><rect x="7" y="1" width="3" height="14" fill="#fff"/><polygon points="0.5,6 2.5,6 7.5,0.8 8.5,0.8 8.5,15.2 7.5,15.2 2.5,10.5 0.5,10.5" fill="#f6f200" stroke="#000" stroke-width="1" stroke-linejoin="bevel"/><path d="M3.5,7 h1 M5.5,7 h1 M4.5,8 h1 M3.5,9 h1 M5.5,9 h1 M4.5,10 h1 M6,5 h1 M6,11 h1 M1.5,7 v3" stroke="#fff" stroke-width="1"/><rect x="6.5" y="4" width="1.6" height="8.5" fill="#000"/><circle cx="8.3" cy="8.2" r="1.5" fill="#000"/><rect x="8" y="7.5" width="1" height="1.2" fill="#fff"/><rect x="8.5" y="2" width="1.5" height="12" fill="#fff"/><path d="M10.5,3 V13.5" stroke="#8e8e8e" stroke-width="1"/><path d="M12.5,6 L14.5,4 M12,8.5 H15.5 M12.5,11 L14.5,13" stroke="#8a8a8a" stroke-width="1"/></svg><div class="t" style="left:66.00px;top:219.69px;font-size:11.0px;line-height:11.0px;letter-spacing:0.878px;color:#000;">13:19:04.0</div><div class="t" style="left:135.78px;top:219.69px;font-size:11.0px;line-height:11.0px;letter-spacing:-0.262px;color:#000;">SEGUE</div><div class="t" style="left:187.50px;top:219.69px;font-size:11.0px;line-height:11.0px;letter-spacing:1.060px;color:#000;">010809</div><div class="t" style="left:257.02px;top:219.69px;font-size:11.0px;line-height:11.0px;letter-spacing:1.125px;color:#0aa5ff;font-weight:bold;-webkit-text-stroke:0.4px #0aa5ff;">MUSIC</div><div class="t" style="left:345.80px;top:219.69px;font-size:11.0px;line-height:11.0px;letter-spacing:1.100px;color:#000;">3:49</div><div class="t" style="left:377.30px;top:219.69px;font-size:11.0px;line-height:11.0px;letter-spacing:0.631px;color:#000;">I&#x27;m So Excited</div><div class="t" style="left:625.20px;top:219.69px;font-size:11.0px;line-height:11.0px;letter-spacing:0.546px;color:#000;">Pointer Sisters</div><svg class="abs" style="left:18px;top:247px" width="16" height="16" viewBox="0 0 16 16"><rect x="7" y="1" width="3" height="14" fill="#fff"/><polygon points="0.5,6 2.5,6 7.5,0.8 8.5,0.8 8.5,15.2 7.5,15.2 2.5,10.5 0.5,10.5" fill="#f6f200" stroke="#000" stroke-width="1" stroke-linejoin="bevel"/><path d="M3.5,7 h1 M5.5,7 h1 M4.5,8 h1 M3.5,9 h1 M5.5,9 h1 M4.5,10 h1 M6,5 h1 M6,11 h1 M1.5,7 v3" stroke="#fff" stroke-width="1"/><rect x="6.5" y="4" width="1.6" height="8.5" fill="#000"/><circle cx="8.3" cy="8.2" r="1.5" fill="#000"/><rect x="8" y="7.5" width="1" height="1.2" fill="#fff"/><rect x="8.5" y="2" width="1.5" height="12" fill="#fff"/><path d="M10.5,3 V13.5" stroke="#8e8e8e" stroke-width="1"/><path d="M12.5,6 L14.5,4 M12,8.5 H15.5 M12.5,11 L14.5,13" stroke="#8a8a8a" stroke-width="1"/></svg><div class="t" style="left:66.00px;top:249.69px;font-size:11.0px;line-height:11.0px;letter-spacing:0.878px;color:#000;">13:20:04.0</div><div class="t" style="left:135.78px;top:249.69px;font-size:11.0px;line-height:11.0px;letter-spacing:-0.262px;color:#000;">SEGUE</div><div class="t" style="left:187.50px;top:249.69px;font-size:11.0px;line-height:11.0px;letter-spacing:1.060px;color:#000;">010795</div><div class="t" style="left:257.02px;top:249.69px;font-size:11.0px;line-height:11.0px;letter-spacing:1.125px;color:#0aa5ff;font-weight:bold;-webkit-text-stroke:0.4px #0aa5ff;">MUSIC</div><div class="t" style="left:345.80px;top:249.69px;font-size:11.0px;line-height:11.0px;letter-spacing:1.100px;color:#000;">2:36</div><div class="t" style="left:377.30px;top:249.69px;font-size:11.0px;line-height:11.0px;letter-spacing:0.621px;color:#000;">(Sittin&#x27; On) The Dock of The Bay</div><div class="t" style="left:625.20px;top:249.69px;font-size:11.0px;line-height:11.0px;letter-spacing:0.595px;color:#000;">Otis Redding</div>
</div>
<div class="abs" style="left:687px;top:365px;width:17px;height:276px;background:repeating-conic-gradient(#e8e8e8 0 25%,#fbfbfb 0 50%) 0 0/2px 2px"></div>
<div class="abs" style="left:15px;top:641px;width:672px;height:17px;background:repeating-conic-gradient(#e8e8e8 0 25%,#fbfbfb 0 50%) 0 0/2px 2px"></div>
<div class="abs" style="left:687px;top:365px;width:1px;height:276px;background:repeating-linear-gradient(#c0c0c0 0 1px,#f4f4f4 1px 2px)"></div>
<div class="abs" style="left:15px;top:641px;width:672px;height:1px;background:repeating-linear-gradient(90deg,#c0c0c0 0 1px,#f4f4f4 1px 2px)"></div>
<div class="abs" style="left:687px;top:641px;width:17px;height:17px;background:#efefef"></div>
<div class="btn" style="left:687px;top:365px;width:16px;height:16px;border-radius:3px;border-color:#9a9a9a;background:linear-gradient(#ececf0,#d0d0d4)"><svg class="abs" style="left:0;top:0" width="16" height="16"><polygon points="3.0,9.0 11.0,9.0 7.0,5.0" fill="#000"/></svg></div>
<div class="btn" style="left:687px;top:402px;width:16px;height:26px;border-radius:3px;border-color:#9a9a9a;background:linear-gradient(#ececf0,#d0d0d4)"></div>
<div class="btn" style="left:687px;top:609px;width:16px;height:16px;border-radius:3px;border-color:#9a9a9a;background:linear-gradient(#ececf0,#d0d0d4)"><svg class="abs" style="left:0;top:0" width="16" height="16"><polygon points="3.0,9.0 11.0,9.0 7.0,5.0" fill="#000"/></svg></div>
<div class="btn" style="left:687px;top:625px;width:16px;height:16px;border-radius:3px;border-color:#9a9a9a;background:linear-gradient(#ececf0,#d0d0d4)"><svg class="abs" style="left:0;top:0" width="16" height="16"><polygon points="3.0,5.0 11.0,5.0 7.0,9.0" fill="#000"/></svg></div>
<div class="btn" style="left:15px;top:641px;width:16px;height:16px;border-radius:3px;border-color:#9a9a9a;background:linear-gradient(#ececf0,#d0d0d4)"><svg class="abs" style="left:0;top:0" width="16" height="16"><polygon points="9.0,3.0 9.0,11.0 5.0,7.0" fill="#000"/></svg></div>
<div class="btn" style="left:31px;top:641px;width:356px;height:16px;border-radius:3px;border-color:#9a9a9a;background:linear-gradient(#ececf0,#d0d0d4)"></div>
<svg class="abs" style="left:0;top:0" width="806" height="732"><rect x="201" y="645" width="1" height="1" fill="#fff"/><rect x="200" y="644" width="1" height="1" fill="#9a9a9a"/><rect x="201" y="649" width="1" height="1" fill="#fff"/><rect x="200" y="648" width="1" height="1" fill="#9a9a9a"/><rect x="201" y="653" width="1" height="1" fill="#fff"/><rect x="200" y="652" width="1" height="1" fill="#9a9a9a"/><rect x="205" y="645" width="1" height="1" fill="#fff"/><rect x="204" y="644" width="1" height="1" fill="#9a9a9a"/><rect x="205" y="649" width="1" height="1" fill="#fff"/><rect x="204" y="648" width="1" height="1" fill="#9a9a9a"/><rect x="205" y="653" width="1" height="1" fill="#fff"/><rect x="204" y="652" width="1" height="1" fill="#9a9a9a"/><rect x="209" y="645" width="1" height="1" fill="#fff"/><rect x="208" y="644" width="1" height="1" fill="#9a9a9a"/><rect x="209" y="649" width="1" height="1" fill="#fff"/><rect x="208" y="648" width="1" height="1" fill="#9a9a9a"/><rect x="209" y="653" width="1" height="1" fill="#fff"/><rect x="208" y="652" width="1" height="1" fill="#9a9a9a"/><rect x="213" y="645" width="1" height="1" fill="#fff"/><rect x="212" y="644" width="1" height="1" fill="#9a9a9a"/><rect x="213" y="649" width="1" height="1" fill="#fff"/><rect x="212" y="648" width="1" height="1" fill="#9a9a9a"/><rect x="213" y="653" width="1" height="1" fill="#fff"/><rect x="212" y="652" width="1" height="1" fill="#9a9a9a"/><rect x="217" y="645" width="1" height="1" fill="#fff"/><rect x="216" y="644" width="1" height="1" fill="#9a9a9a"/><rect x="217" y="649" width="1" height="1" fill="#fff"/><rect x="216" y="648" width="1" height="1" fill="#9a9a9a"/><rect x="217" y="653" width="1" height="1" fill="#fff"/><rect x="216" y="652" width="1" height="1" fill="#9a9a9a"/></svg>
<div class="btn" style="left:655px;top:641px;width:16px;height:16px;border-radius:3px;border-color:#9a9a9a;background:linear-gradient(#ececf0,#d0d0d4)"><svg class="abs" style="left:0;top:0" width="16" height="16"><polygon points="9.0,3.0 9.0,11.0 5.0,7.0" fill="#000"/></svg></div>
<div class="btn" style="left:671px;top:641px;width:16px;height:16px;border-radius:3px;border-color:#9a9a9a;background:linear-gradient(#ececf0,#d0d0d4)"><svg class="abs" style="left:0;top:0" width="16" height="16"><polygon points="5.0,3.0 5.0,11.0 9.0,7.0" fill="#000"/></svg></div>
<div class="abs" style="left:0;top:0;width:4px;height:1px;background:#000"></div><div class="abs" style="left:0;top:1px;width:2px;height:1px;background:#000"></div><div class="abs" style="left:0;top:2px;width:1px;height:2px;background:#000"></div>
<div class="abs" style="left:802px;top:0;width:4px;height:1px;background:#000"></div><div class="abs" style="left:804px;top:1px;width:2px;height:1px;background:#000"></div><div class="abs" style="left:805px;top:2px;width:1px;height:2px;background:#000"></div>
</body></html>
